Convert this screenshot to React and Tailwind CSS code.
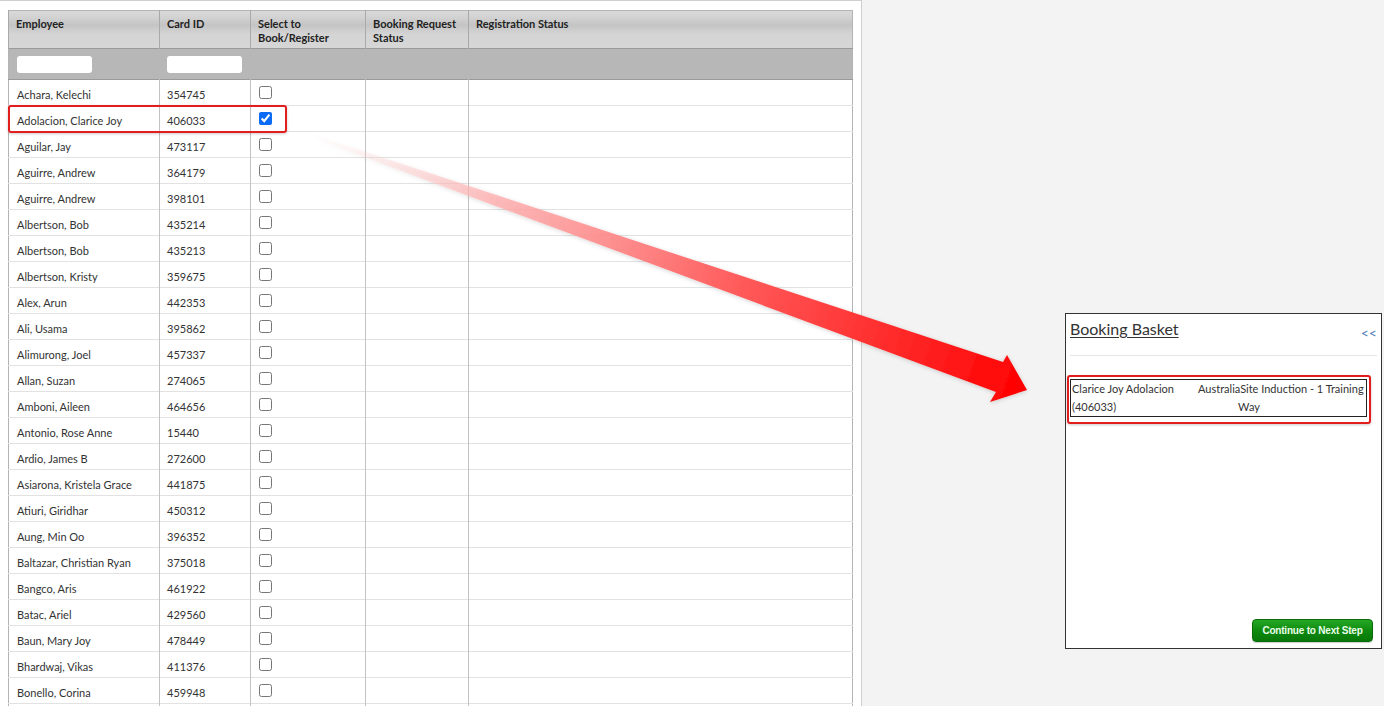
import React from 'react'

const employees = [
  ['Achara, Kelechi', '354745'],
  ['Adolacion, Clarice Joy', '406033', true],
  ['Aguilar, Jay', '473117'],
  ['Aguirre, Andrew', '364179'],
  ['Aguirre, Andrew', '398101'],
  ['Albertson, Bob', '435214'],
  ['Albertson, Bob', '435213'],
  ['Albertson, Kristy', '359675'],
  ['Alex, Arun', '442353'],
  ['Ali, Usama', '395862'],
  ['Alimurong, Joel', '457337'],
  ['Allan, Suzan', '274065'],
  ['Amboni, Aileen', '464656'],
  ['Antonio, Rose Anne', '15440'],
  ['Ardio, James B', '272600'],
  ['Asiarona, Kristela Grace', '441875'],
  ['Atiuri, Giridhar', '450312'],
  ['Aung, Min Oo', '396352'],
  ['Baltazar, Christian Ryan', '375018'],
  ['Bangco, Aris', '461922'],
  ['Batac, Ariel', '429560'],
  ['Baun, Mary Joy', '478449'],
  ['Bhardwaj, Vikas', '411376'],
  ['Bonello, Corina', '459948'],
]

const font = { fontFamily: 'Lato, "Open Sans", Arial, sans-serif' }

const HeaderCell = ({ children }) => (
  <th className="align-top text-left font-bold text-[11px] leading-[14px] text-[#222] px-[7px] pt-[6px] border-l border-[#a9a9a9] whitespace-nowrap">
    {children}
  </th>
)

const EmployeeTable = () => (
  <table className="table-fixed border-collapse w-[844px] border border-[#b3b3b3]">
    <colgroup>
      <col className="w-[151px]" />
      <col className="w-[91px]" />
      <col className="w-[115px]" />
      <col className="w-[103px]" />
      <col className="w-[384px]" />
    </colgroup>
    <thead>
      <tr className="h-[38px] bg-[linear-gradient(180deg,#dadada_0%,#d0d0d0_20%,#c4c4c4_38%,#d4d4d4_62%,#d6d6d6_100%)] border-b border-[#9a9a9a]">
        <HeaderCell>Employee</HeaderCell>
        <HeaderCell>Card ID</HeaderCell>
        <HeaderCell>Select to<br />Book/Register</HeaderCell>
        <HeaderCell>Booking Request<br />Status</HeaderCell>
        <HeaderCell>Registration Status</HeaderCell>
      </tr>
      <tr className="h-[31px] bg-[#b7b7b7] border-b border-[#9a9a9a]">
        <td className="px-[8px]">
          <div className="w-[75px] h-[17px] bg-white rounded-[3px]" />
        </td>
        <td className="px-[7px]">
          <div className="w-[75px] h-[17px] bg-white rounded-[3px]" />
        </td>
        <td />
        <td />
        <td />
      </tr>
    </thead>
    <tbody>
      {employees.map(([name, id, checked], i) => (
        <tr key={i} className="h-[26px] border-b border-[#e2e2e2] bg-white">
          <td className="px-[8px] pt-[5px] text-[11px] text-[#333] whitespace-nowrap border-r border-[#c2c2c2]">{name}</td>
          <td className="px-[7px] pt-[5px] text-[11px] text-[#333] border-r border-[#c2c2c2]">{id}</td>
          <td className="align-top pt-[6px] pl-[8px] border-r border-[#c2c2c2]">
            <input
              type="checkbox"
              readOnly
              checked={!!checked}
              className="block m-0 w-[13px] h-[13px] accent-[#0a6cf5]"
            />
          </td>
          <td className="border-r border-[#c2c2c2]" />
          <td />
        </tr>
      ))}
      <tr className="h-[26px] bg-white">
        <td className="border-r border-[#c2c2c2]" />
        <td className="border-r border-[#c2c2c2]" />
        <td className="border-r border-[#c2c2c2]" />
        <td className="border-r border-[#c2c2c2]" />
        <td />
      </tr>
    </tbody>
  </table>
)

const BookingBasket = () => (
  <div className="w-[317px] h-[336px] bg-white border border-[#333] flex flex-col px-[4px] pt-[5px] pb-[6px]">
    <div className="flex items-start justify-between pb-[12px] border-b border-[#e6e6e6]">
      <span className="text-[16px] leading-[20px] text-[#333] underline underline-offset-[2px]">Booking Basket</span>
      <span className="text-[14px] text-[#4a7ab5] pt-[3px]">&lt;&lt;</span>
    </div>
    <div className="mt-[19px] -ml-[3px] w-[304px] pl-[1px] pr-[2px] pt-[2px] pb-[5px] border-2 border-[#e11d1d] rounded-[3px] shadow-[0_1px_3px_rgba(0,0,0,0.2)]">
      <div className="flex border border-[#222] text-[11px] leading-[18px] text-[#333]">
        <div className="w-[127px] pl-[1px]">Clarice Joy Adolacion<br />(406033)</div>
        <div className="flex-1 whitespace-nowrap">
          <div>AustraliaSite Induction - 1 Training</div>
          <div className="w-[102px] text-center">Way</div>
        </div>
      </div>
    </div>
    <div className="flex-1" />
    <div className="flex justify-end pr-[4px]">
      <button
        className="h-[23px] w-[121px] rounded-[4px] border border-[#0b6b0b] bg-[linear-gradient(180deg,#25a825_0%,#0f8a0f_50%,#087808_100%)] text-[10px] font-bold tracking-[-0.2px] text-[#eaffea] shadow-[0_1px_1px_rgba(0,0,0,0.2)]"
        style={{ fontFamily: '"Liberation Sans", Arial, sans-serif' }}
      >
        Continue to Next Step
      </button>
    </div>
  </div>
)

const Arrow = () => (
  <svg className="absolute inset-0 pointer-events-none" width="1384" height="706" viewBox="0 0 1384 706">
    <defs>
      <linearGradient id="arrowFill" gradientUnits="userSpaceOnUse" x1="308" y1="135" x2="1027" y2="390">
        <stop offset="0" stopColor="#ffe0e0" stopOpacity="0" />
        <stop offset="0.25" stopColor="#ffb0b0" stopOpacity="0.8" />
        <stop offset="0.6" stopColor="#ff5a5a" />
        <stop offset="1" stopColor="#ff0000" />
      </linearGradient>
      <filter id="arrowShadow" x="-10%" y="-10%" width="120%" height="130%">
        <feDropShadow dx="0" dy="1" stdDeviation="2" floodColor="#000" floodOpacity="0.18" />
      </filter>
    </defs>
    <polygon
      points="308,133 1003,362 1007,355 1027,390 990,402 996,392 310,137"
      fill="url(#arrowFill)"
      filter="url(#arrowShadow)"
    />
  </svg>
)

export default function App() {
  return (
    <div className="relative w-[1384px] h-[706px] overflow-hidden bg-[#f3f3f3]" style={font}>
      <div className="flex h-full">
        <div className="w-[862px] h-full bg-white border-t border-r border-[#cfcfcf] pl-[8px] pt-[9px] overflow-hidden">
          <EmployeeTable />
        </div>
        <div className="flex-1 pl-[203px] pt-[313px]">
          <BookingBasket />
        </div>
      </div>

      {/* highlight on the selected row */}
      <div className="absolute left-[8px] top-[105px] w-[279px] h-[28px] border-2 border-[#e11d1d] rounded-[3px] shadow-[0_1px_3px_rgba(0,0,0,0.2)] pointer-events-none" />

      <Arrow />
    </div>
  )
}
